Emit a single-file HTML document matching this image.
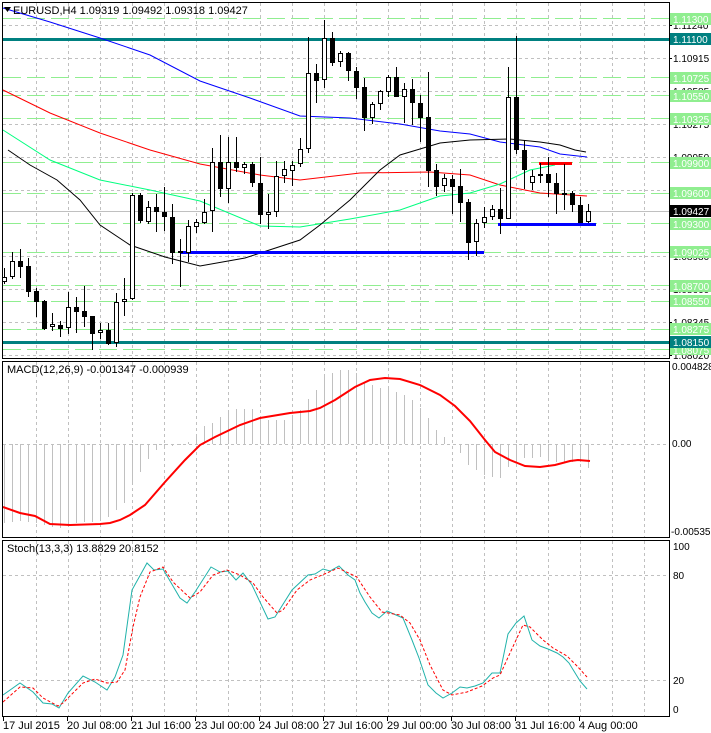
<!DOCTYPE html>
<html><head><meta charset="utf-8">
<style>
html,body{margin:0;padding:0;background:#fff;}
svg{display:block;font-family:"Liberation Sans",sans-serif;}
</style></head>
<body>
<svg width="711" height="733" viewBox="0 0 711 733" xmlns="http://www.w3.org/2000/svg">
<rect width="711" height="733" fill="#fff"/>
<g stroke="#c0c0c0" stroke-dasharray="3,3" shape-rendering="crispEdges">
<path d="M36.5 3V358M68.5 3V358M100.5 3V358M132.5 3V358M164.5 3V358M196.5 3V358M228.5 3V358M260.5 3V358M292.5 3V358M324.5 3V358M356.5 3V358M388.5 3V358M420.5 3V358M452.5 3V358M484.5 3V358M516.5 3V358M548.5 3V358M580.5 3V358M612.5 3V358M644.5 3V358"/>
<path d="M36.5 362V537M68.5 362V537M100.5 362V537M132.5 362V537M164.5 362V537M196.5 362V537M228.5 362V537M260.5 362V537M292.5 362V537M324.5 362V537M356.5 362V537M388.5 362V537M420.5 362V537M452.5 362V537M484.5 362V537M516.5 362V537M548.5 362V537M580.5 362V537M612.5 362V537M644.5 362V537"/>
<path d="M36.5 541V716M68.5 541V716M100.5 541V716M132.5 541V716M164.5 541V716M196.5 541V716M228.5 541V716M260.5 541V716M292.5 541V716M324.5 541V716M356.5 541V716M388.5 541V716M420.5 541V716M452.5 541V716M484.5 541V716M516.5 541V716M548.5 541V716M580.5 541V716M612.5 541V716M644.5 541V716"/>
<path d="M3 25.5H669M3 58.5H669M3 91.5H669M3 124.5H669M3 157.5H669M3 190.5H669M3 256.5H669M3 289.5H669M3 322.5H669M3 355.5H669"/>
<path d="M3 444.5H669M3 575.5H669M3 680.5H669"/>
</g>
<g stroke="#90ee90" stroke-dasharray="18,6" shape-rendering="crispEdges">
<path d="M3 18.5H669M3 77.5H669M3 95.5H669M3 118.5H669M3 162.5H669M3 193.5H669M3 223.5H669M3 252.5H669M3 285.5H669M3 301.5H669M3 329.5H669M3 349.5H669"/>
</g>
<path d="M3 211.5H669" stroke="#c0c0c0" shape-rendering="crispEdges"/>
<path d="M3 39.5H669M3 342.5H669" stroke="#008080" stroke-width="3" shape-rendering="crispEdges"/>
<g fill="none" stroke-width="1">
<polyline stroke="#0000ff" points="3,8 50,22 100,38 150,55 200,81 250,98 300,116 350,118 400,124 440,131 470,134 500,142 540,147 560,154 587,157"/>
<polyline stroke="#ff0000" points="3,90 50,113 100,133 150,150 200,164 260,175 300,180 360,173 430,172 470,175 500,185 540,193 587,196"/>
<polyline stroke="#00ff7f" points="3,130 50,160 100,180 150,190 200,201 260,226 300,227 350,219 400,210 440,196 470,193 500,184 530,170 555,165"/>
<polyline stroke="#000000" points="8,150 30,165 57,180 80,200 100,225 130,245 165,257 200,266 245,258 300,240 320,225 350,200 380,170 400,155 440,143 470,140 510,139 540,142 560,145 575,150 586,152"/>
</g>
<path d="M180 252.5H484M498 224.5H596" stroke="#0000ff" stroke-width="3"/>
<path d="M539 163.5H572" stroke="#ff0000" stroke-width="3"/>
<path stroke="#000" fill="none" shape-rendering="crispEdges" d="M4.5 268V284M12.5 252V279M20.5 249V278M28.5 258V297M36.5 288V317M44.5 300V330M52.5 313V331M60.5 321V337M68.5 292V334M76.5 297V333M84.5 286V327M92.5 316V350M100.5 323V339M108.5 323V345M116.5 293V347M124.5 278V316M132.5 193V300M140.5 193V223M148.5 201V224M156.5 194V232M164.5 187V231M172.5 204V264M180.5 239V287M188.5 220V262M196.5 219V233M204.5 199V224M212.5 148V232M220.5 135V197M228.5 137V203M236.5 137V172M244.5 162V174M252.5 162V187M260.5 157V224M268.5 194V229M276.5 161V217M284.5 161V183M292.5 161V186M300.5 138V167M308.5 37V153M316.5 64V103M324.5 20V88M332.5 32V66M340.5 51V67M348.5 52V81M356.5 67V99M364.5 78V131M372.5 102V124M380.5 90V110M388.5 75V97M396.5 67V97M404.5 83V123M412.5 79V125M420.5 95V142M428.5 72V187M436.5 164V196M444.5 174V192M452.5 175V214M460.5 169V222M468.5 199V260M476.5 219V256M484.5 207V228M492.5 205V220M500.5 188V234M508.5 67V219M516.5 36V154M524.5 140V189M532.5 170V190M540.5 163V183M548.5 157V197M556.5 173V214M564.5 164V210M572.5 191V212M580.5 197V223M588.5 204V223"/>
<path fill="#000" shape-rendering="crispEdges" d="M18 261h5V267h-5ZM26 266h5V292h-5ZM34 291h5V302h-5ZM42 301h5V329h-5ZM58 325h5V329h-5ZM74 307h5V312h-5ZM82 311h5V317h-5ZM90 316h5V334h-5ZM106 330h5V344h-5ZM138 195h5V221h-5ZM154 207h5V212h-5ZM162 212h5V217h-5ZM170 217h5V253h-5ZM178 251h5V253h-5ZM218 162h5V189h-5ZM234 162h5V168h-5ZM250 164h5V183h-5ZM258 183h5V215h-5ZM314 73h5V81h-5ZM330 38h5V63h-5ZM346 53h5V71h-5ZM354 71h5V88h-5ZM362 87h5V118h-5ZM394 77h5V97h-5ZM410 89h5V103h-5ZM418 103h5V118h-5ZM426 117h5V171h-5ZM434 170h5V187h-5ZM450 179h5V187h-5ZM458 186h5V203h-5ZM466 202h5V243h-5ZM498 209h5V219h-5ZM514 97h5V150h-5ZM522 150h5V170h-5ZM546 174h5V183h-5ZM554 183h5V194h-5ZM562 193h5V195h-5ZM570 193h5V205h-5ZM578 205h5V223h-5Z"/>
<path fill="#fff" stroke="#000" shape-rendering="crispEdges" d="M2.5 277.5h4v4h-4ZM10.5 261.5h4v15h-4ZM50.5 324.5h4v2h-4ZM66.5 307.5h4v20h-4ZM98.5 330.5h4v2h-4ZM114.5 302.5h4v40h-4ZM122.5 299.5h4v2h-4ZM130.5 195.5h4v103h-4ZM146.5 207.5h4v14h-4ZM186.5 226.5h4v26h-4ZM194.5 222.5h4v4h-4ZM202.5 212.5h4v10h-4ZM210.5 162.5h4v48h-4ZM226.5 162.5h4v26h-4ZM242.5 164.5h4v3h-4ZM266.5 212.5h4v2h-4ZM274.5 176.5h4v35h-4ZM282.5 169.5h4v6h-4ZM290.5 165.5h4v5h-4ZM298.5 149.5h4v14h-4ZM306.5 73.5h4v75h-4ZM322.5 38.5h4v41h-4ZM338.5 53.5h4v8h-4ZM370.5 104.5h4v13h-4ZM378.5 91.5h4v12h-4ZM386.5 77.5h4v14h-4ZM402.5 89.5h4v7h-4ZM442.5 178.5h4v7h-4ZM474.5 223.5h4v18h-4ZM482.5 217.5h4v5h-4ZM490.5 209.5h4v7h-4ZM506.5 97.5h4v121h-4ZM530.5 176.5h4v6h-4ZM538.5 174.5h4v1h-4ZM586.5 211.5h4v10h-4Z"/>
<path stroke="#c0c0c0" shape-rendering="crispEdges" d="M4.5 444V523M12.5 444V522M20.5 444V521M28.5 444V522M36.5 444V523M44.5 444V525M52.5 444V527M60.5 444V528M68.5 444V525M76.5 444V523M84.5 444V522M92.5 444V522M100.5 444V520M108.5 444V517M116.5 444V510M124.5 444V503M132.5 444V485M140.5 444V472M148.5 444V459M156.5 444V450M164.5 444V447M172.5 444V446M180.5 444V445M188.5 444V442M196.5 444V435M204.5 444V426M212.5 444V423M220.5 444V417M228.5 444V413M236.5 444V409M244.5 444V409M252.5 444V409M260.5 444V417M268.5 444V420M276.5 444V420M284.5 444V420M292.5 444V415M300.5 444V410M308.5 444V399M316.5 444V390M324.5 444V377M332.5 444V373M340.5 444V370M348.5 444V370M356.5 444V373M364.5 444V383M372.5 444V385M380.5 444V388M388.5 444V387M396.5 444V392M404.5 444V395M412.5 444V400M420.5 444V408M428.5 444V418M436.5 444V430M444.5 444V437M452.5 444V444M460.5 444V453M468.5 444V465M476.5 444V470M484.5 444V475M492.5 444V477M500.5 444V478M508.5 444V467M516.5 444V462M524.5 444V458M532.5 444V458M540.5 444V457M548.5 444V458M556.5 444V462M564.5 444V462M572.5 444V462M580.5 444V462M588.5 444V468"/>
<polyline fill="none" stroke="#ff0000" stroke-width="2" points="3,507 20,513 35,516 50,524 70,525 100,524 110,523 120,520 130,515 145,505 165,482 185,460 200,445 215,437 240,425 260,418 290,413 310,411 320,408 335,400 355,387 370,380 385,378 400,379 420,385 440,395 455,406 470,421 485,440 495,452 510,460 525,466 540,467 555,465 570,461 578,460 590,461"/>
<polyline fill="none" stroke="#20b2aa" stroke-width="1" points="3,695 20,683 33,692 43,703 52,704 59,708 68,693 83,676 95,682 107,690 115,677 123,655 132,590 147,563 154,570 163,569 180,598 187,603 195,592 211,567 220,572 228,571 236,580 243,573 252,585 268,619 275,617 292,590 308,575 315,574 323,569 330,571 339,566 348,575 355,580 360,593 365,602 372,613 379,618 387,611 396,615 403,618 412,640 419,658 428,685 436,693 443,698 452,693 460,687 467,688 475,686 483,683 492,673 500,673 508,634 516,623 524,616 532,640 540,646 548,649 557,653 563,657 569,663 580,681 587,689"/>
<polyline fill="none" stroke="#ff0000" stroke-width="1" stroke-dasharray="3,2" points="3,702 20,687 33,688 43,698 58,706 63,703 83,683 95,679 107,683 117,682 125,670 133,627 140,597 150,572 163,567 173,582 190,598 200,592 213,575 227,570 240,575 253,583 263,597 277,613 283,610 297,590 310,580 327,573 338,568 357,577 360,582 370,597 382,612 400,615 410,623 420,640 430,665 443,690 452,695 467,692 482,686 493,678 500,675 510,653 523,625 530,627 543,640 553,648 567,656 577,666 587,677"/>
<g fill="none" stroke="#000" shape-rendering="crispEdges">
<rect x="2.5" y="2.5" width="667" height="356"/>
<rect x="2.5" y="361.5" width="667" height="176"/>
<rect x="2.5" y="540.5" width="667" height="176"/>
</g>
<path stroke="#000" shape-rendering="crispEdges" d="M3.5 717V721M67.5 717V721M131.5 717V721M195.5 717V721M259.5 717V721M323.5 717V721M387.5 717V721M451.5 717V721M515.5 717V721M579.5 717V721"/>
<path stroke="#000" shape-rendering="crispEdges" d="M669 25.5h3M669 58.5h3M669 91.5h3M669 124.5h3M669 157.5h3M669 190.5h3M669 256.5h3M669 289.5h3M669 322.5h3M669 355.5h3"/>
<path d="M4 7h7l-3.5 5z" fill="#000"/>
<text x="13" y="14" font-size="11" fill="#000">EURUSD,H4  1.09319 1.09492 1.09318 1.09427</text>
<text x="7" y="373" font-size="11" fill="#000">MACD(12,26,9) -0.001347 -0.000939</text>
<text x="7" y="552" font-size="11" fill="#000">Stoch(13,3,3) 13.8829 20.8152</text>
<g font-size="10" fill="#000">
<text x="673" y="29">1.11240</text>
<text x="673" y="62">1.10915</text>
<text x="673" y="95">1.10585</text>
<text x="673" y="128">1.10275</text>
<text x="673" y="161">1.09950</text>
<text x="673" y="194">1.09630</text>
<text x="673" y="260">1.08980</text>
<text x="673" y="293">1.08660</text>
<text x="673" y="326">1.08345</text>
<text x="673" y="359">1.08020</text>
<text x="672" y="370">0.004828</text>
<text x="672" y="447">0.00</text>
<text x="671" y="535">-0.005351</text>
<text x="673" y="550">100</text>
<text x="673" y="579">80</text>
<text x="673" y="684">20</text>
<text x="673" y="713">0</text>
</g>
<g font-size="10">
<rect x="670" y="13" width="41" height="12" fill="#90ee90"/><text x="673" y="23" fill="#fff">1.11300</text>
<rect x="670" y="72" width="41" height="12" fill="#90ee90"/><text x="673" y="82" fill="#fff">1.10725</text>
<rect x="670" y="90" width="41" height="12" fill="#90ee90"/><text x="673" y="100" fill="#fff">1.10550</text>
<rect x="670" y="113" width="41" height="12" fill="#90ee90"/><text x="673" y="123" fill="#fff">1.10325</text>
<rect x="670" y="157" width="41" height="12" fill="#90ee90"/><text x="673" y="167" fill="#fff">1.09900</text>
<rect x="670" y="187" width="41" height="12" fill="#90ee90"/><text x="673" y="197" fill="#fff">1.09600</text>
<rect x="670" y="218" width="41" height="12" fill="#90ee90"/><text x="673" y="228" fill="#fff">1.09300</text>
<rect x="670" y="246" width="41" height="12" fill="#90ee90"/><text x="673" y="256" fill="#fff">1.09025</text>
<rect x="670" y="280" width="41" height="12" fill="#90ee90"/><text x="673" y="290" fill="#fff">1.08700</text>
<rect x="670" y="295" width="41" height="12" fill="#90ee90"/><text x="673" y="305" fill="#fff">1.08550</text>
<rect x="670" y="323" width="41" height="12" fill="#90ee90"/><text x="673" y="333" fill="#fff">1.08275</text>
<rect x="670" y="344" width="41" height="11" fill="#90ee90"/><text x="673" y="354" fill="#fff">1.08075</text>
<rect x="670" y="33" width="41" height="12" fill="#008080"/><text x="673" y="43" fill="#fff">1.11100</text>
<rect x="670" y="336" width="41" height="12" fill="#008080"/><text x="673" y="346" fill="#fff">1.08150</text>
<rect x="670" y="205" width="41" height="12" fill="#000"/><text x="673" y="215" fill="#fff">1.09427</text>
</g>
<g font-size="11" fill="#000">
<text x="3" y="729">17 Jul 2015</text>
<text x="67" y="729">20 Jul 08:00</text>
<text x="131" y="729">21 Jul 16:00</text>
<text x="195" y="729">23 Jul 00:00</text>
<text x="259" y="729">24 Jul 08:00</text>
<text x="323" y="729">27 Jul 16:00</text>
<text x="387" y="729">29 Jul 00:00</text>
<text x="451" y="729">30 Jul 08:00</text>
<text x="515" y="729">31 Jul 16:00</text>
<text x="579" y="729">4 Aug 00:00</text>
</g>
</svg>
</body></html>
